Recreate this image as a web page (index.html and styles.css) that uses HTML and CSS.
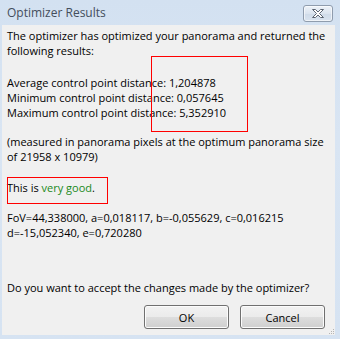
FILE: index.html
```html
<!DOCTYPE html>
<html>
<head>
<meta charset="utf-8">
<link rel="stylesheet" href="styles.css">
</head>
<body>
<div class="window">
  <div class="titlebar">
    <span class="title">Optimizer Results</span>
    <button class="close" aria-label="Close">
      <svg width="16" height="11" viewBox="0 0 16 11">
        <path d="M2.5 1.5 L5.5 1.5 L8 4 L10.5 1.5 L13.5 1.5 L9.5 5.5 L13.5 9.5 L10.5 9.5 L8 7 L5.5 9.5 L2.5 9.5 L6.5 5.5 Z" fill="#ffffff" stroke="#5b6472" stroke-width="1" stroke-linejoin="round"/>
      </svg>
    </button>
  </div>
  <div class="client">
    <p class="block b-intro">The optimizer has optimized your panorama and returned the<br>following results:</p>
    <p class="block b-stats">Average control point distance: 1,204878<br>Minimum control point distance: 0,057645<br>Maximum control point distance: 5,352910</p>
    <p class="block b-measured">(measured in panorama pixels at the optimum panorama size<br>of 21958 x 10979)</p>
    <p class="block b-verdict">This is <span class="good">very good</span>.</p>
    <p class="block b-params">FoV=44,338000, a=0,018117, b=-0,055629, c=0,016215<br>d=-15,052340, e=0,720280</p>
    <p class="block b-question">Do you want to accept the changes made by the optimizer?</p>
    <div class="buttons">
      <button class="btn">OK</button>
      <button class="btn">Cancel</button>
    </div>
    <svg class="grip" width="5" height="5" viewBox="0 0 5 5">
      <rect x="4" y="0" width="1" height="1" fill="#b5b5b5"/>
      <rect x="2" y="2" width="1" height="1" fill="#b5b5b5"/>
      <rect x="4" y="2" width="1" height="1" fill="#b5b5b5"/>
      <rect x="0" y="4" width="1" height="1" fill="#b5b5b5"/>
      <rect x="2" y="4" width="1" height="1" fill="#b5b5b5"/>
      <rect x="4" y="4" width="1" height="1" fill="#b5b5b5"/>
    </svg>
    <div class="mark mark-stats"></div>
    <div class="mark mark-verdict"></div>
  </div>
</div>
</body>
</html>
```

FILE: styles.css
```css
html, body {
  margin: 0;
  padding: 0;
}
body {
  width: 340px;
  height: 339px;
  overflow: hidden;
  font-family: "Open Sans", "Noto Sans", sans-serif;
}
.window {
  width: 340px;
  height: 339px;
  box-sizing: border-box;
  background: linear-gradient(#d3e1f1, #d9e5f3 40%, #d6e3f2);
  display: flex;
  flex-direction: column;
  padding: 0 5px 4px 2px;
}
.titlebar {
  height: 25px;
  flex: none;
  display: flex;
  align-items: flex-start;
  justify-content: space-between;
  padding-left: 5px;
  box-sizing: border-box;
}
.title {
  font-size: 12px;
  color: #434e5c;
  line-height: 16px;
  margin-top: 5px;
}
.close {
  margin-top: 5px;
  margin-right: 2px;
  width: 30px;
  height: 17px;
  border: 1px solid #8f9cad;
  border-radius: 3px;
  background: linear-gradient(#eef3f9, #dbe4ef 50%, #cfdbe9 51%, #d9e3ef);
  box-shadow: inset 0 0 0 1px rgba(255,255,255,0.6);
  padding: 0;
  display: flex;
  align-items: center;
  justify-content: center;
  box-sizing: border-box;
}
.close svg {
  display: block;
}
.client {
  position: relative;
  flex: 1;
  background: #f0f0f0;
  padding: 3px 10px 0 5px;
  display: flex;
  flex-direction: column;
  font-size: 11px;
  line-height: 15px;
  color: #000;
}
.block {
  margin: 0;
  white-space: nowrap;
}
.b-stats { margin-top: 17px; }
.b-measured { margin-top: 14px; }
.b-verdict { margin-top: 16px; }
.b-params { margin-top: 15px; }
.b-question { margin-top: 40px; }
.good { color: #1a8a1a; }
.buttons {
  margin-top: 10px;
  display: flex;
  justify-content: flex-end;
  gap: 11px;
}
.btn {
  width: 85px;
  height: 24px;
  box-sizing: border-box;
  border: 1px solid #707070;
  border-radius: 3px;
  background: linear-gradient(#f2f2f2, #ebebeb 50%, #dddddd 51%, #cfcfcf);
  box-shadow: inset 0 0 0 1px #fcfcfc;
  font-family: inherit;
  font-size: 11px;
  color: #000;
  padding: 0;
}
.grip {
  position: absolute;
  right: 1px;
  bottom: 1px;
  display: block;
}
.mark {
  position: absolute;
  border: 1px solid #ff0000;
  box-sizing: border-box;
  pointer-events: none;
}
.mark-stats {
  left: 149px;
  top: 31px;
  width: 97px;
  height: 76px;
  border-color: #ff0000;
}
.mark-verdict {
  left: 5px;
  top: 152px;
  width: 101px;
  height: 27px;
  border-color: #ff0000;
}
```
